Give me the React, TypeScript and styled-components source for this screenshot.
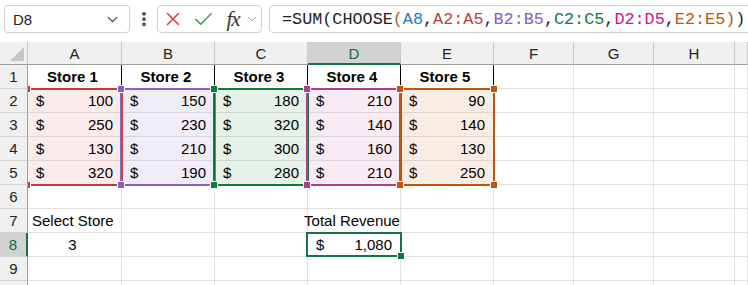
import React from "react";
import styled, { createGlobalStyle } from "styled-components";
import { Check, ChevronDown, EllipsisVertical, X } from "lucide-react";

const GlobalStyle = createGlobalStyle`
  html, body {
    margin: 0;
    padding: 0;
    background: #ffffff;
    overflow: hidden;
  }
  * {
    box-sizing: border-box;
  }
`;

const Page = styled.div`
  width: 748px;
  height: 285px;
  overflow: hidden;
  font-family: "Liberation Sans", Arial, sans-serif;
  color: #000;
`;

const FormulaBar = styled.div`
  display: flex;
  align-items: center;
  height: 42px;
  padding: 0 0 4px 4px;
  overflow: hidden;
  background: #ffffff;
`;

const Box = styled.div<{ $width?: number }>`
  display: flex;
  align-items: center;
  height: 28px;
  border: 1px solid #d1d1d1;
  border-radius: 4px;
  background: #fff;
  flex: ${(p) => (p.$width ? `0 0 ${p.$width}px` : "1 0 auto")};
  min-width: 0;
`;

const NameBox = styled(Box)`
  justify-content: space-between;
  padding: 0 8px 0 8px;
  font-size: 15px;
  color: #222;
`;

const Dots = styled.div`
  display: flex;
  align-items: center;
  justify-content: center;
  flex: 0 0 27px;
  color: #444;
`;

const FxBox = styled(Box)`
  padding-left: 4px;
`;

const IconSlot = styled.span<{ $w: number }>`
  display: flex;
  align-items: center;
  justify-content: center;
  flex: 0 0 ${(p) => p.$w}px;
`;

const Fx = styled.span`
  flex: 0 0 22px;
  font-family: "Liberation Serif", "Times New Roman", serif;
  font-style: italic;
  font-size: 21px;
  color: #333;
  letter-spacing: -1px;
  text-align: center;
`;

const FormulaBox = styled(Box)`
  margin-left: 7px;
  margin-right: -12px;
  padding-left: 12px;
  font-family: "Liberation Mono", "DejaVu Sans Mono", monospace;
  font-size: 16.8px;
  color: #222;
  white-space: nowrap;
`;

const Ref = styled.span<{ $c: string }>`
  color: ${(p) => p.$c};
`;

const Sheet = styled.div`
  display: grid;
  grid-template-columns: 28px 94px 93px 93px 93px 93px 80px 80px 81px 1fr;
  grid-template-rows: 23px repeat(10, 24px);
`;

const Corner = styled.div`
  grid-area: 1 / 1;
  position: relative;
  background: #f0f0f0;
  border-right: 1px solid #c8c8c8;
  border-bottom: 1px solid #9f9f9f;
  &::after {
    content: "";
    position: absolute;
    right: 3px;
    bottom: 3px;
    border-left: 14px solid transparent;
    border-bottom: 14px solid #c6c6c6;
  }
`;

const ColHead = styled.div<{ $c: number; $sel?: boolean }>`
  grid-area: 1 / ${(p) => p.$c};
  display: flex;
  align-items: center;
  justify-content: center;
  font-size: 15px;
  padding-top: 1px;
  background: ${(p) => (p.$sel ? "#d2d2d2" : "#f0f0f0")};
  color: ${(p) => (p.$sel ? "#0e6b3a" : "#222")};
  border-right: 1px solid #c8c8c8;
  border-bottom: ${(p) => (p.$sel ? "2px solid #1e7145" : "1px solid #9f9f9f")};
`;

const RowHead = styled.div<{ $r: number; $sel?: boolean }>`
  grid-area: ${(p) => p.$r} / 1;
  position: relative;
  z-index: 3;
  display: flex;
  align-items: center;
  justify-content: center;
  font-size: 15px;
  background: ${(p) => (p.$sel ? "#d2d2d2" : "#f0f0f0")};
  color: ${(p) => (p.$sel ? "#0e6b3a" : "#222")};
  border-right: ${(p) => (p.$sel ? "2px solid #1e7145" : "1px solid #9f9f9f")};
  border-bottom: 1px solid #d4d4d4;
`;

const Cell = styled.div<{
  $r: number;
  $c: number;
  $fill?: string;
  $align?: "left" | "center" | "right" | "split";
  $bold?: boolean;
  $edge?: boolean;
}>`
  grid-area: ${(p) => p.$r} / ${(p) => p.$c};
  display: flex;
  align-items: center;
  justify-content: ${(p) =>
    p.$align === "center"
      ? "center"
      : p.$align === "split"
      ? "space-between"
      : p.$align === "right"
      ? "flex-end"
      : "flex-start"};
  padding: 0 8px 0 ${(p) => (p.$align === "split" ? 8 : 4)}px;
  font-size: 15px;
  font-weight: ${(p) => (p.$bold ? 700 : 400)};
  white-space: nowrap;
  overflow: visible;
  background: ${(p) => p.$fill || "#ffffff"};
  border-right: 1px solid
    ${(p) => (p.$edge ? "#000" : p.$fill ? "rgba(0,0,0,0.1)" : "#e1e1e1")};
  border-bottom: 1px solid ${(p) => (p.$fill ? "rgba(0,0,0,0.1)" : "#e1e1e1")};
`;

const Range = styled.div<{ $c: number; $color: string }>`
  grid-column: ${(p) => p.$c};
  grid-row: 3 / 7;
  position: relative;
  z-index: 2;
  margin: -1px -1px -1px -2px;
  border: 2px solid ${(p) => p.$color};
  pointer-events: none;
`;

const Selection = styled.div`
  grid-column: 5;
  grid-row: 9;
  position: relative;
  z-index: 2;
  margin: -1px -1px 0 -2px;
  border: 2px solid #1e7145;
  pointer-events: none;
`;

const Handle = styled.span<{ $color: string; $v: "top" | "bottom"; $h: "left" | "right" }>`
  position: absolute;
  ${(p) => p.$v}: -4px;
  ${(p) => p.$h}: -4px;
  width: 6px;
  height: 6px;
  background: ${(p) => p.$color};
  box-shadow: 0 0 0 1px #fff;
`;

const Dollar = styled.span``;
const Amount = styled.span``;

interface Store {
  name: string;
  values: number[];
  fill: string;
  border: string;
}

const stores: Store[] = [
  { name: "Store 1", values: [100, 250, 130, 320], fill: "#fbebea", border: "#c23b3d" },
  { name: "Store 2", values: [150, 230, 210, 190], fill: "#f0edf9", border: "#8a5ec2" },
  { name: "Store 3", values: [180, 320, 300, 280], fill: "#e6f1e8", border: "#0f7b36" },
  { name: "Store 4", values: [210, 140, 160, 210], fill: "#f8ebf4", border: "#b03e88" },
  { name: "Store 5", values: [90, 140, 130, 250], fill: "#f9ece3", border: "#c0550d" },
];

const letters = ["A", "B", "C", "D", "E", "F", "G", "H"];

const App: React.FC = () => {
  const cells: React.ReactNode[] = [];

  // sheet rows 1..10 -> grid rows 2..11
  for (let row = 1; row <= 10; row++) {
    const r = row + 1;
    cells.push(
      <RowHead key={`rh${row}`} $r={r} $sel={row === 8}>
        {row < 10 ? row : ""}
      </RowHead>
    );
    for (let col = 0; col < 9; col++) {
      const c = col + 2;
      const store = stores[col];
      const key = `c${row}-${col}`;
      if (row === 1 && store) {
        cells.push(
          <Cell key={key} $r={r} $c={c} $align="center" $bold $edge>
            {store.name}
          </Cell>
        );
      } else if (row >= 2 && row <= 5 && store) {
        cells.push(
          <Cell key={key} $r={r} $c={c} $fill={store.fill} $align="split">
            <Dollar>$</Dollar>
            <Amount>{store.values[row - 2]}</Amount>
          </Cell>
        );
      } else if (row === 7 && col === 0) {
        cells.push(
          <Cell key={key} $r={r} $c={c}>
            Select Store
          </Cell>
        );
      } else if (row === 7 && col === 3) {
        cells.push(
          <Cell key={key} $r={r} $c={c} $align="center">
            Total Revenue
          </Cell>
        );
      } else if (row === 8 && col === 0) {
        cells.push(
          <Cell key={key} $r={r} $c={c} $align="center">
            3
          </Cell>
        );
      } else if (row === 8 && col === 3) {
        cells.push(
          <Cell key={key} $r={r} $c={c} $align="split">
            <Dollar>$</Dollar>
            <Amount>1,080</Amount>
          </Cell>
        );
      } else {
        cells.push(<Cell key={key} $r={r} $c={c} />);
      }
    }
  }

  return (
    <Page>
      <GlobalStyle />
      <FormulaBar>
        <NameBox $width={126}>
          <span>D8</span>
          <ChevronDown size={17} strokeWidth={1.5} color="#333" />
        </NameBox>
        <Dots>
          <EllipsisVertical size={18} strokeWidth={3} />
        </Dots>
        <FxBox $width={105}>
          <IconSlot $w={22}>
            <X size={22} strokeWidth={1.6} color="#e0393e" />
          </IconSlot>
          <IconSlot $w={38}>
            <Check size={23} strokeWidth={1.6} color="#3d9a4c" />
          </IconSlot>
          <Fx>fx</Fx>
          <IconSlot $w={16}>
            <ChevronDown size={14} strokeWidth={1.3} color="#777" />
          </IconSlot>
        </FxBox>
        <FormulaBox>
          =SUM(CHOOSE<Ref $c="#b4581f">(</Ref>
          <Ref $c="#2a77c9">A8</Ref>,<Ref $c="#c23b3d">A2:A5</Ref>,
          <Ref $c="#8a5ec2">B2:B5</Ref>,<Ref $c="#0f7b36">C2:C5</Ref>,
          <Ref $c="#c4168c">D2:D5</Ref>,<Ref $c="#c0550d">E2:E5</Ref>
          <Ref $c="#b4581f">)</Ref>)
        </FormulaBox>
      </FormulaBar>
      <Sheet>
        <Corner />
        {letters.map((l, i) => (
          <ColHead key={l} $c={i + 2} $sel={l === "D"}>
            {l}
          </ColHead>
        ))}
        <ColHead $c={10} />
        {cells}
        {stores.map((s, i) => (
          <Range key={s.name} $c={i + 2} $color={s.border}>
            <Handle $color={s.border} $v="top" $h="left" />
            <Handle $color={s.border} $v="top" $h="right" />
            <Handle $color={s.border} $v="bottom" $h="left" />
            <Handle $color={s.border} $v="bottom" $h="right" />
          </Range>
        ))}
        <Selection>
          <Handle $color="#1e7145" $v="bottom" $h="right" />
        </Selection>
      </Sheet>
    </Page>
  );
};

export default App;
